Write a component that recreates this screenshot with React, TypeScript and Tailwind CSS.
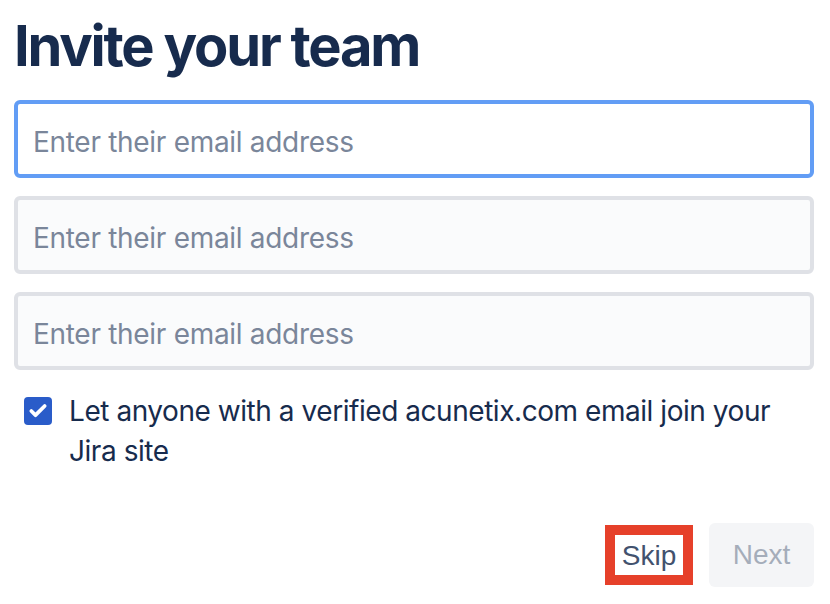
import { Check } from 'lucide-react';

const font = { fontFamily: 'Inter, "Noto Sans", sans-serif' };

function EmailField({ focused }: { focused?: boolean }) {
  return (
    <input
      type="email"
      placeholder="Enter their email address"
      className={
        'block w-full h-[78px] rounded-[6px] border-[4px] pl-[15px] pr-4 pt-[6px] text-[28px] tracking-[-0.3px] text-[#172b4d] outline-none placeholder:text-[#7a869a] ' +
        (focused ? 'border-[#629df5] bg-white' : 'border-[#dfe1e6] bg-[#fafbfc]')
      }
    />
  );
}

export default function App() {
  return (
    <div className="w-[830px] h-[604px] bg-white overflow-hidden" style={font}>
      <div className="pl-[14px] w-[814px]">
        <h1 className="pt-[18px] text-[56px] leading-none font-bold tracking-[-2.2px] text-[#172b4d]">
          Invite your team
        </h1>

        <div className="mt-[26px] flex flex-col gap-[18px]">
          <EmailField focused />
          <EmailField />
          <EmailField />
        </div>

        <label className="mt-[21px] ml-[10px] flex items-start gap-[17px]">
          <span className="mt-[6px] w-[28px] h-[28px] shrink-0 rounded-[4px] bg-[#2a5cc9] flex items-center justify-center">
            <Check size={20} strokeWidth={4.5} className="text-white" />
          </span>
          <span className="text-[28px] leading-[40px] tracking-[-0.45px] text-[#172b4d]">
            Let anyone with a verified acunetix.com email join your Jira site
          </span>
        </label>

        <div className="mt-[52px] flex justify-end items-center gap-[16px]" style={{ fontFamily: '"Liberation Sans", Arial, sans-serif' }}>
          <div className="border-[10px] border-[#e6402a]">
            <button className="w-[68px] h-[40px] bg-white text-[28px] text-[#42526e]">Skip</button>
          </div>
          <button className="w-[105px] h-[64px] rounded-[6px] bg-[#f4f5f7] text-[28px] text-[#a5adba]">Next</button>
        </div>
      </div>
    </div>
  );
}
